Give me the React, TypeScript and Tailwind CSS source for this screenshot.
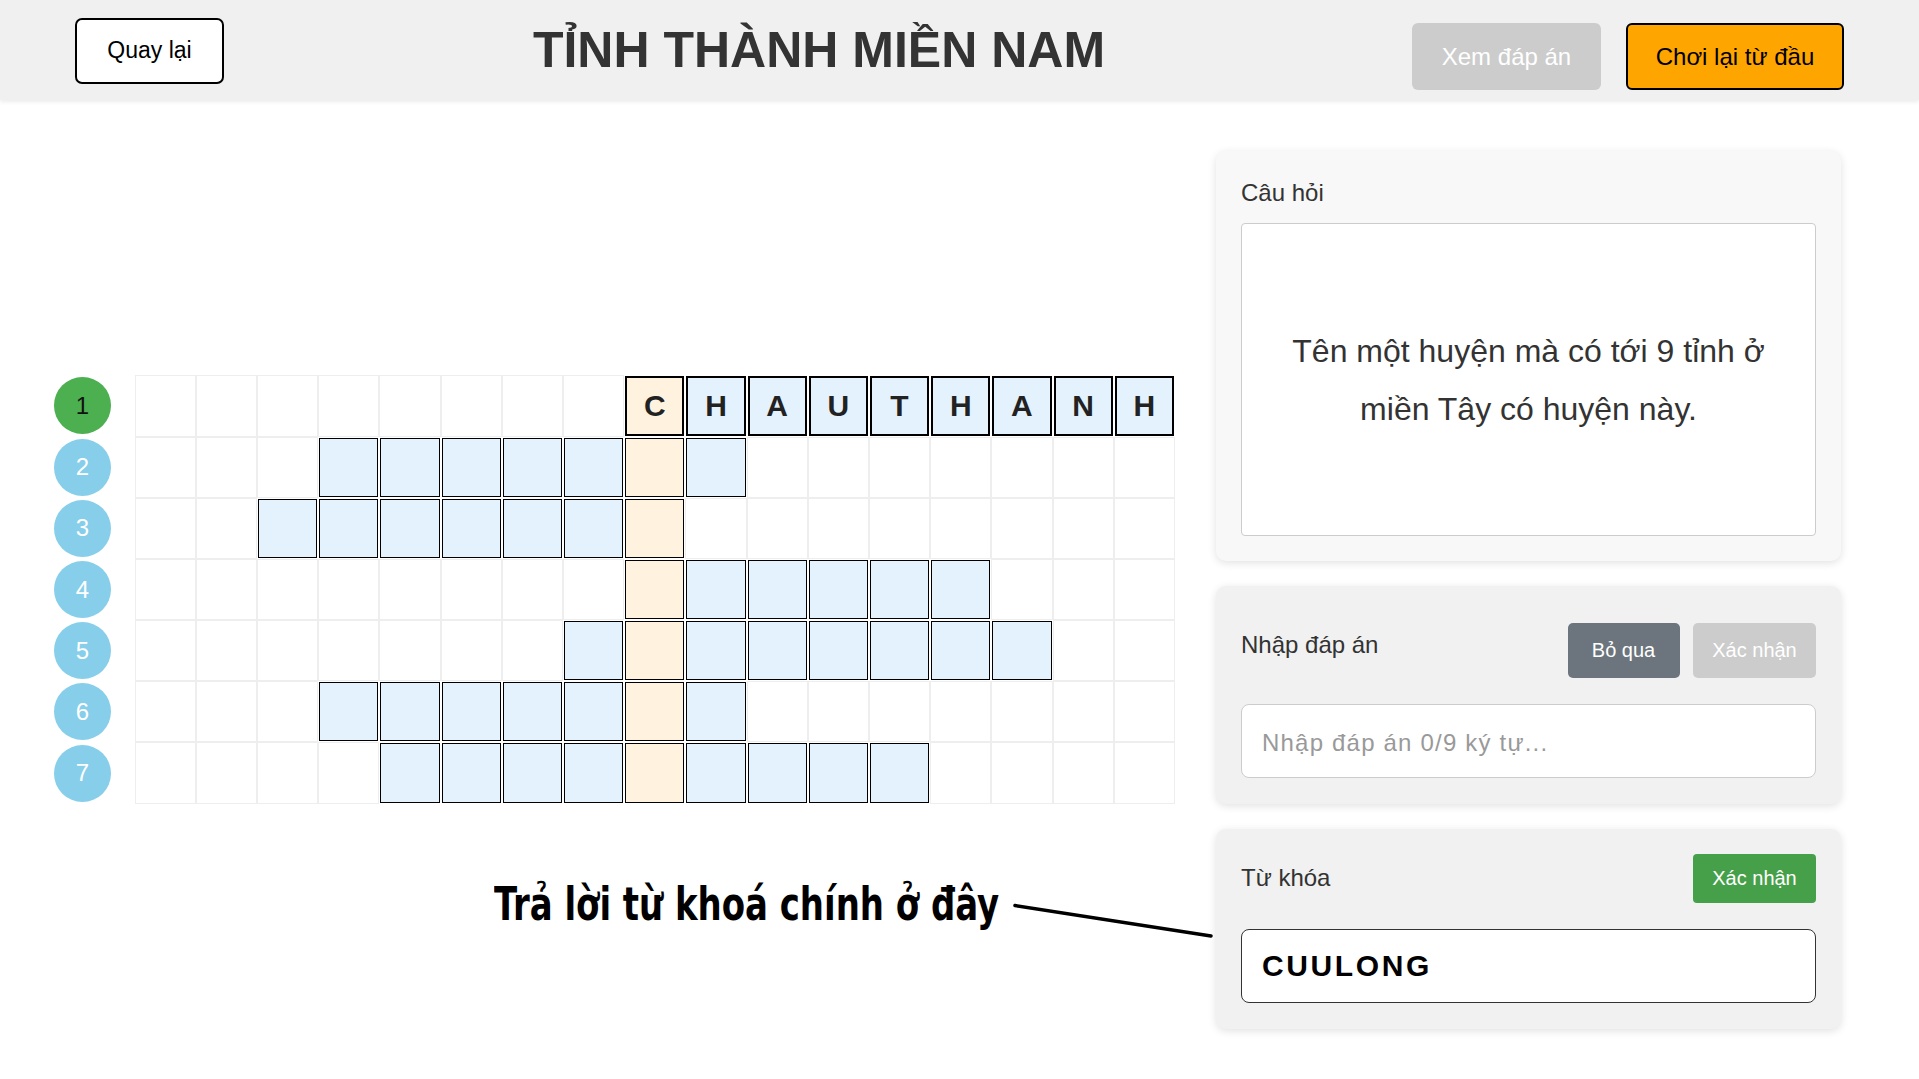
import React from "react";

const COLS = 17;
const ROWS: { start: number; end: number; letters?: string }[] = [
  { start: 8, end: 16, letters: "CHAUTHANH" },
  { start: 3, end: 9 },
  { start: 2, end: 8 },
  { start: 8, end: 13 },
  { start: 7, end: 14 },
  { start: 3, end: 9 },
  { start: 4, end: 12 },
];
const KEY_COL = 8;

function Cell({ r, c }: { r: number; c: number }) {
  const row = ROWS[r];
  const active = c >= row.start && c <= row.end;
  if (!active) {
    return <div className="border border-[#eeeeee] bg-white" />;
  }
  const isKey = c === KEY_COL;
  const selected = r === 0;
  const letter = row.letters ? row.letters[c - row.start] : "";
  return (
    <div
      className={
        "m-px flex items-center justify-center border-black text-[30px] font-bold text-[#222] " +
        (selected ? "border-2 " : "border ") +
        (isKey ? "bg-[#fff3e0]" : "bg-[#e3f2fd]")
      }
    >
      {letter}
    </div>
  );
}

export default function App() {
  const cells: React.ReactNode[] = [];
  for (let r = 0; r < ROWS.length; r++) {
    for (let c = 0; c < COLS; c++) {
      cells.push(<Cell key={`${r}-${c}`} r={r} c={c} />);
    }
  }

  return (
    <div className="relative flex h-screen flex-col overflow-hidden bg-white [font-family:'Liberation_Sans',Arial,sans-serif] text-[#333]">
      {/* Header */}
      <header className="z-10 flex h-[100px] shrink-0 items-center justify-between bg-[#f0f0f0] pl-[75px] pr-[75px] shadow-[0_2px_4px_rgba(0,0,0,0.08)]">
        <button className="mt-[1px] h-[66px] w-[149px] rounded-[7px] border-2 border-black bg-white text-[23px] text-black">
          Quay lại
        </button>
        <h1 className="ml-[2px] text-[50px] font-bold leading-none text-[#333]">TỈNH THÀNH MIỀN NAM</h1>
        <div className="mt-[13px] flex items-center gap-[25px]">
          <button className="h-[67px] w-[189px] rounded-[6px] bg-[#cccccc] text-[24px] text-white">
            Xem đáp án
          </button>
          <button className="h-[67px] w-[218px] rounded-[6px] border-2 border-black bg-[#ffa500] text-[24px] text-black">
            Chơi lại từ đầu
          </button>
        </div>
      </header>

      {/* Main */}
      <main className="flex flex-1 items-center justify-between pl-[54px] pr-[78px]">
        <div className="flex items-start">
          <div className="mr-[23.7px] flex w-[57px] flex-col">
            {ROWS.map((_, i) => (
              <div key={i} className="flex h-[61.2px] items-center justify-center">
                <div
                  className={
                    "flex h-[57px] w-[57px] items-center justify-center rounded-full text-[24px] " +
                    (i === 0 ? "bg-[#4caf50] text-[#111]" : "bg-[#87ceeb] text-white")
                  }
                >
                  {i + 1}
                </div>
              </div>
            ))}
          </div>
          <div className="grid grid-cols-[repeat(17,61.2px)] auto-rows-[61.2px]">{cells}</div>
        </div>

        <div className="flex w-[625px] flex-col gap-[25px]">
          <div className="rounded-[10px] bg-[#f8f8f8] p-[25px] shadow-[0_2px_8px_rgba(0,0,0,0.12)]">
            <div className="text-[24px] leading-[33px] text-[#333]">Câu hỏi</div>
            <div className="mt-[14px] flex h-[313px] items-center justify-center rounded-[4px] border border-[#cccccc] bg-white px-[40px] pt-[3px] text-center text-[32px] leading-[1.8] text-[#333]">
              Tên một huyện mà có tới 9 tỉnh ở miền Tây có huyện này.
            </div>
          </div>

          <div className="rounded-[10px] bg-[#f1f1f1] px-[25px] pb-[26px] pt-[37px] shadow-[0_2px_8px_rgba(0,0,0,0.12)]">
            <div className="flex items-center justify-between">
              <div className="-mt-[10px] text-[24px] text-[#333]">Nhập đáp án</div>
              <div className="flex gap-[13.5px]">
                <button className="h-[55px] w-[112px] rounded-[5px] bg-[#6c757d] text-[20px] text-white">
                  Bỏ qua
                </button>
                <button className="h-[55px] w-[123px] rounded-[5px] bg-[#cccccc] text-[20px] text-white">
                  Xác nhận
                </button>
              </div>
            </div>
            <input
              className="mt-[26px] h-[74px] w-full rounded-[8px] border border-[#cccccc] bg-white pl-[20px] pr-[20px] pt-[4px] text-[24px] tracking-[1.2px] outline-none placeholder:text-[#999]"
              placeholder="Nhập đáp án 0/9 ký tự..."
            />
          </div>

          <div className="rounded-[10px] bg-[#f1f1f1] px-[25px] pb-[26px] pt-[25px] shadow-[0_2px_8px_rgba(0,0,0,0.12)]">
            <div className="flex items-center justify-between">
              <div className="text-[24px] text-[#333]">Từ khóa</div>
              <button className="h-[49px] w-[123px] rounded-[4px] bg-[#46a049] text-[20px] text-white">
                Xác nhận
              </button>
            </div>
            <input
              className="mt-[26px] h-[74px] w-full rounded-[8px] border border-[#333] bg-white px-[20px] text-[30px] font-bold tracking-[2.6px] text-black outline-none"
              value="CUULONG"
              readOnly
            />
          </div>
        </div>
      </main>

      {/* Annotation overlay */}
      <div className="absolute left-[494px] top-[880px] origin-left scale-x-[0.82] whitespace-nowrap text-[46px] font-bold leading-[48px] text-black [font-family:'DejaVu_Sans_Condensed','DejaVu_Sans',sans-serif]">
        Trả lời từ khoá chính ở đây
      </div>
      <svg className="absolute left-0 top-0" width="1919" height="1079" style={{ pointerEvents: "none" }}>
        <line x1="1015" y1="905.5" x2="1211" y2="936" stroke="#000" strokeWidth="3.5" strokeLinecap="round" />
      </svg>
    </div>
  );
}
